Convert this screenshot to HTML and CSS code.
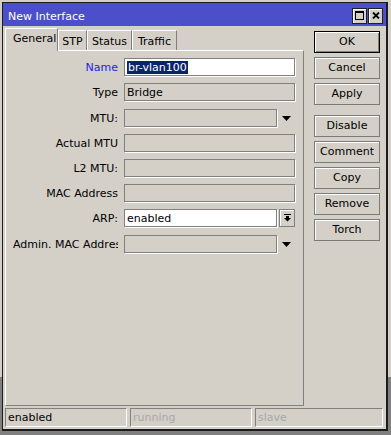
FILE: index.html
```html
<!DOCTYPE html>
<html>
<head>
    <title>New Interface</title>
    <link rel="stylesheet" href="styles.css">
</head>
<body>
    <div class="window">
        <div class="titlebar">
            <span class="title">New Interface</span>
            <div class="title-buttons">
                <span class="tbtn">
                    <svg width="9" height="9" viewBox="0 0 9 9"><rect x="0.5" y="0.5" width="8" height="8" fill="none" stroke="#000"/><rect x="0" y="0" width="9" height="2" fill="#000"/></svg>
                </span>
                <span class="tbtn">
                    <svg width="8" height="7" viewBox="0 0 8 7"><path d="M1 0.5L7 6.5M7 0.5L1 6.5" stroke="#000" stroke-width="1.8"/></svg>
                </span>
            </div>
        </div>
        <div class="content">
            <div class="left">
                <div class="tabs">
                    <div class="tab active">General</div>
                    <div class="tab stp">STP</div>
                    <div class="tab status">Status</div>
                    <div class="tab traffic">Traffic</div>
                </div>
                <div class="panel">
                    <div class="row">
                        <label class="blue">Name</label>
                        <div class="field white"><span class="sel">br-vlan100</span></div>
                    </div>
                    <div class="row">
                        <label>Type</label>
                        <div class="field">Bridge</div>
                    </div>
                    <div class="row bump">
                        <label>MTU:</label>
                        <div class="field short"></div>
                        <span class="arrow"><svg width="9" height="5" viewBox="0 0 9 5"><polygon points="0,0 9,0 4.5,5" fill="#000"/></svg></span>
                    </div>
                    <div class="row">
                        <label>Actual MTU</label>
                        <div class="field"></div>
                    </div>
                    <div class="row">
                        <label>L2 MTU:</label>
                        <div class="field"></div>
                    </div>
                    <div class="row">
                        <label>MAC Address</label>
                        <div class="field"></div>
                    </div>
                    <div class="row">
                        <label>ARP:</label>
                        <div class="field white short">enabled</div>
                        <span class="pick"><svg width="7" height="8" viewBox="0 0 7 8"><rect x="0" y="0" width="7" height="1" fill="#000"/><rect x="2" y="2" width="3" height="2" fill="#000"/><polygon points="0,4 7,4 3.5,7.5" fill="#000"/></svg></span>
                    </div>
                    <div class="row bump">
                        <label class="clip">Admin. MAC Address:</label>
                        <div class="field short"></div>
                        <span class="arrow"><svg width="9" height="5" viewBox="0 0 9 5"><polygon points="0,0 9,0 4.5,5" fill="#000"/></svg></span>
                    </div>
                </div>
            </div>
            <div class="buttons">
                <div class="btn default">OK</div>
                <div class="btn">Cancel</div>
                <div class="btn">Apply</div>
                <div class="btn gap">Disable</div>
                <div class="btn">Comment</div>
                <div class="btn">Copy</div>
                <div class="btn">Remove</div>
                <div class="btn">Torch</div>
            </div>
        </div>
        <div class="statusbar">
            <div class="cell">enabled</div>
            <div class="cell off">running</div>
            <div class="cell off">slave</div>
        </div>
    </div>
</body>
</html>
```

FILE: styles.css
```css
* { margin: 0; padding: 0; box-sizing: border-box; font-family: "DejaVu Sans", sans-serif; font-size: 11px; }
html { height: 100%; background: linear-gradient(#d4d0c8 0, #d4d0c8 377px, #808080 377px); }
body { padding: 2px 0 0 2px; }

.window { width: 386px; height: 429px; border: 1px solid #1c1c1c; border-right-width: 2px; border-bottom-width: 2px; background: #d4d0c8; display: flex; flex-direction: column; }

.titlebar { height: 23px; background: #4b4fc9; color: white; display: flex; align-items: center; justify-content: space-between; padding: 3px 3px 0 5px; }
.title-buttons { display: flex; gap: 1px; margin-top: -1px; }
.tbtn { width: 15px; height: 16px; background: #d4d0c8; border: 1px solid #202020; box-shadow: inset 1px 1px #fff; display: flex; align-items: center; justify-content: center; }

.content { flex: 1; display: flex; padding: 2px 0 0 2px; }
.left { width: 299px; }

.tabs { display: flex; height: 22px; align-items: flex-end; }
.tab { height: 20px; border: 1px solid #fff; border-right-color: #808080; border-bottom: none; padding-top: 4px; line-height: 13px; text-align: center; }
.tab.active { width: 53px; height: 23px; margin-bottom: -1px; padding: 3px 0 0 7px; text-align: left; background: #d4d0c8; position: relative; z-index: 1; }
.tab.stp { width: 29px; }
.tab.status { width: 45px; }
.tab.traffic { width: 45px; }

.panel { height: 356px; border: 1px solid #fff; border-right-color: #808080; border-bottom-color: #808080; padding: 7px 0 0 7px; display: flex; flex-direction: column; gap: 6px; }
.row { display: flex; height: 19px; align-items: flex-start; }
.row.bump { margin-top: 1px; }
.row label { width: 105px; margin-right: 6px; line-height: 19px; text-align: right; white-space: nowrap; overflow: hidden; }
.row label.blue { color: #1c1cf0; }
.row label.clip { text-align: left; }

.field { width: 171px; height: 18px; border: 1px solid #808080; box-shadow: 1px 1px 0 #fff; padding: 1px 0 0 2px; line-height: 15px; white-space: nowrap; overflow: hidden; }
.field.white { background: white; }
.field.short { width: 153px; }
.sel { background: #0a246a; color: white; padding: 0 1px; }

.arrow { width: 18px; height: 19px; display: flex; align-items: center; justify-content: center; }
.pick { width: 16px; height: 18px; margin-left: 2px; border: 1px solid #808080; box-shadow: inset 1px 1px #fff; display: flex; align-items: center; justify-content: center; }

.buttons { width: 66px; margin-left: 10px; padding-top: 3px; display: flex; flex-direction: column; gap: 4px; }
.btn { height: 22px; border: 1px solid #7a7a7a; box-shadow: inset 1px 1px #fff; text-align: center; line-height: 20px; }
.btn.default { border-color: #000; box-shadow: inset 1px 1px #fff, inset -1px -1px #808080; }
.btn.gap { margin-top: 6px; }

.statusbar { display: grid; grid-template-columns: 122px 122px 1fr; gap: 3px; height: 19px; margin: 2px 3px 2px 2px; }
.cell { border: 1px solid #fff; border-top-color: #808080; border-left-color: #808080; padding: 1px 0 0 2px; line-height: 16px; }
.cell.off { color: #a8a8a8; }
```
